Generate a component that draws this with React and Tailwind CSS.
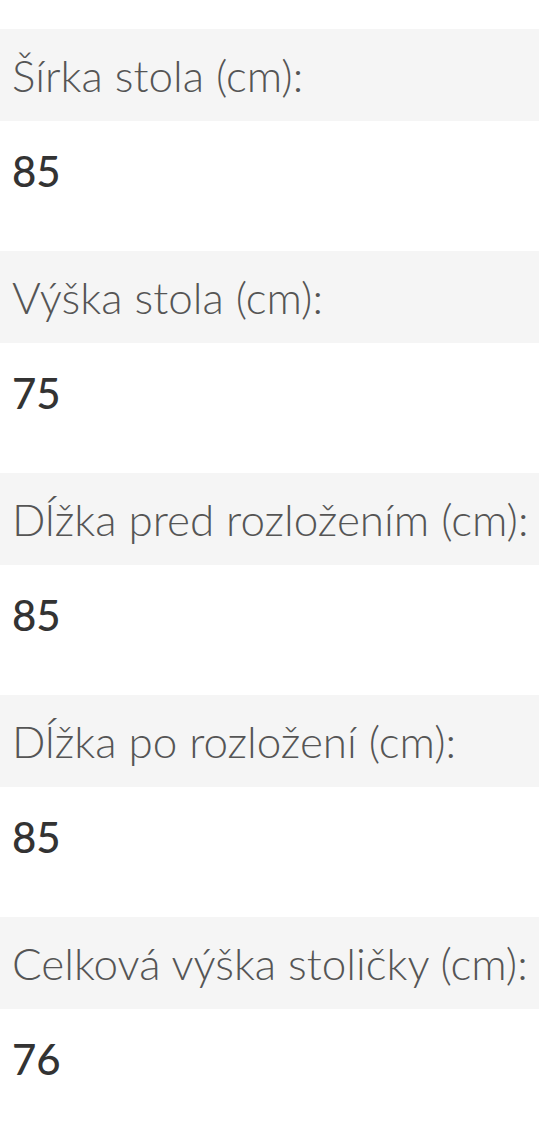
const specs = [
  { label: "Šírka stola (cm):", value: "85" },
  { label: "Výška stola (cm):", value: "75" },
  { label: "Dĺžka pred rozložením (cm):", value: "85" },
  { label: "Dĺžka po rozložení (cm):", value: "85" },
  { label: "Celková výška stoličky (cm):", value: "76" },
];

export default function App() {
  return (
    <div className="min-h-screen bg-white pt-[29px]" style={{ fontFamily: "Lato, 'Noto Sans', sans-serif" }}>
      {specs.map((row, i) => (
        <div key={i}>
          <div className="h-[92px] flex items-center bg-[#f5f5f5] px-[12px]">
            <span className="text-[44px] font-light text-[#555555] whitespace-nowrap">{row.label}</span>
          </div>
          <div className="h-[130px] pt-[19px] px-[12px]">
            <span className="text-[42px] font-medium text-[#333333]">{row.value}</span>
          </div>
        </div>
      ))}
    </div>
  );
}
